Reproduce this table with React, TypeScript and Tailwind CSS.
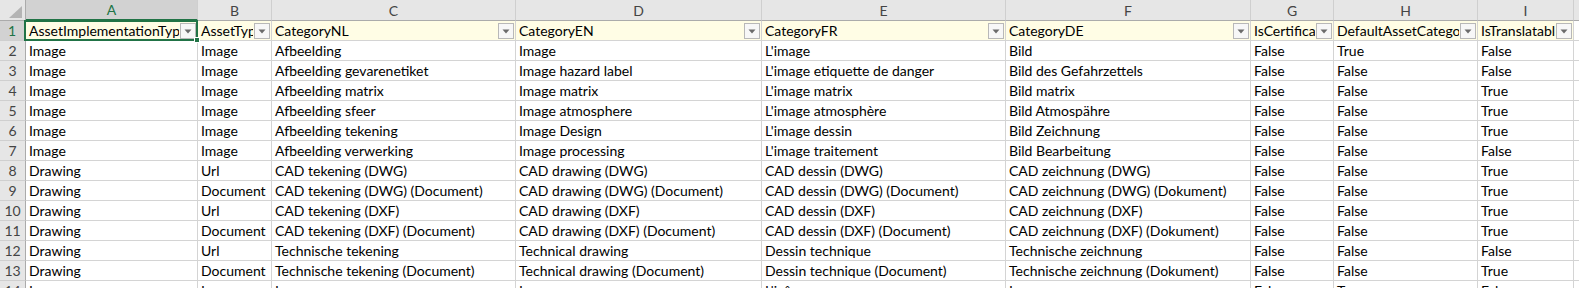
import React from "react";

const cols = [
  { k: "A", w: "w-[172px]" },
  { k: "B", w: "w-[74px]" },
  { k: "C", w: "w-[244px]" },
  { k: "D", w: "w-[246px]" },
  { k: "E", w: "w-[244px]" },
  { k: "F", w: "w-[245px]" },
  { k: "G", w: "w-[83px]" },
  { k: "H", w: "w-[144px]" },
  { k: "I", w: "w-[96px]" },
];

const header = [
  "AssetImplementationType",
  "AssetType",
  "CategoryNL",
  "CategoryEN",
  "CategoryFR",
  "CategoryDE",
  "IsCertificate",
  "DefaultAssetCategory",
  "IsTranslatable",
];

const rows: string[][] = [
  ["Image", "Image", "Afbeelding", "Image", "L'image", "Bild", "False", "True", "False"],
  ["Image", "Image", "Afbeelding gevarenetiket", "Image hazard label", "L'image etiquette de danger", "Bild des Gefahrzettels", "False", "False", "False"],
  ["Image", "Image", "Afbeelding matrix", "Image matrix", "L'image matrix", "Bild matrix", "False", "False", "True"],
  ["Image", "Image", "Afbeelding sfeer", "Image atmosphere", "L'image atmosphère", "Bild Atmospähre", "False", "False", "True"],
  ["Image", "Image", "Afbeelding tekening", "Image Design", "L'image dessin", "Bild Zeichnung", "False", "False", "True"],
  ["Image", "Image", "Afbeelding verwerking", "Image processing", "L'image traitement", "Bild Bearbeitung", "False", "False", "False"],
  ["Drawing", "Url", "CAD tekening (DWG)", "CAD drawing (DWG)", "CAD dessin (DWG)", "CAD zeichnung (DWG)", "False", "False", "True"],
  ["Drawing", "Document", "CAD tekening (DWG) (Document)", "CAD drawing (DWG) (Document)", "CAD dessin (DWG) (Document)", "CAD zeichnung (DWG) (Dokument)", "False", "False", "True"],
  ["Drawing", "Url", "CAD tekening (DXF)", "CAD drawing (DXF)", "CAD dessin (DXF)", "CAD zeichnung (DXF)", "False", "False", "True"],
  ["Drawing", "Document", "CAD tekening (DXF) (Document)", "CAD drawing (DXF) (Document)", "CAD dessin (DXF) (Document)", "CAD zeichnung (DXF) (Dokument)", "False", "False", "True"],
  ["Drawing", "Url", "Technische tekening", "Technical drawing", "Dessin technique", "Technische zeichnung", "False", "False", "False"],
  ["Drawing", "Document", "Technische tekening (Document)", "Technical drawing (Document)", "Dessin technique (Document)", "Technische zeichnung (Dokument)", "False", "False", "True"],
  ["Image", "Image", "Icoon", "Icon", "L'icône", "Icon", "False", "True", "False"],
];

const font = { fontFamily: "Lato, 'Open Sans', sans-serif" };

function FilterButton() {
  return (
    <div className="absolute right-[1px] bottom-[1px] w-[16px] h-[16px] border border-[#b8b8b8] bg-[#f7f7f7] flex items-center justify-center">
      <svg width="8" height="5" viewBox="0 0 8 5">
        <path d="M0.5 0.5 L7.5 0.5 L4 4.5 Z" fill="#6b6b6b" />
      </svg>
    </div>
  );
}

export default function App() {
  return (
    <div className="w-[1579px] h-[288px] overflow-hidden bg-white text-black" style={font}>
      {/* column header row */}
      <div className="flex h-[21px]">
        <div className="w-[26px] h-[21px] shrink-0 bg-[#e6e6e6] border-r border-b border-[#ababab] relative">
          <svg className="absolute left-[9px] top-[6px]" width="13" height="12" viewBox="0 0 13 12">
            <path d="M13 0 L13 12 L0 12 Z" fill="#b4b4b4" />
          </svg>
        </div>
        {cols.map((c, i) => (
          <div
            key={c.k}
            className={`${c.w} h-[21px] shrink-0 flex items-center justify-center text-[14px] border-r border-[#cfcfcf] ${
              i === 0
                ? "bg-[#d2d2d2] text-[#217346] border-b-2 border-b-[#217346]"
                : "bg-[#e6e6e6] text-[#444444] border-b border-b-[#ababab]"
            }`}
          >
            {c.k}
          </div>
        ))}
        <div className="flex-1 h-[21px] bg-[#e6e6e6] border-b border-[#ababab]" />
      </div>

      {/* header data row (row 1) */}
      <div className="flex h-[20px]">
        <div className="w-[26px] h-[20px] shrink-0 bg-[#d2d2d2] border-r-2 border-[#217346] border-b border-b-[#cfcfcf] flex items-center justify-center text-[14px] text-[#217346]">
          1
        </div>
        {cols.map((c, i) => (
          <div
            key={c.k}
            className={`${c.w} h-[20px] shrink-0 relative bg-[#fffde5] border-r border-b border-[#d4d4d4] text-[14px] whitespace-nowrap`}
          >
            <div className="absolute left-0 top-0 bottom-0 right-[18px] overflow-hidden pl-[3px] flex items-center">
              {header[i]}
            </div>
            <FilterButton />
            {i === 0 && (
              <div className="absolute left-[-2px] top-[-1px] right-[-1px] bottom-[-1px] border-2 border-[#217346] z-10">
                <div className="absolute right-[-4px] bottom-[-4px] w-[6px] h-[6px] bg-[#217346] border border-white" />
              </div>
            )}
          </div>
        ))}
        <div className="flex-1 h-[20px] border-b border-[#d4d4d4]" />
      </div>

      {rows.map((r, ri) => (
        <div key={ri} className="flex h-[20px]">
          <div className="w-[26px] h-[20px] shrink-0 bg-[#e6e6e6] border-r border-[#ababab] border-b border-b-[#cfcfcf] flex items-center justify-center text-[14px] text-[#444444]">
            {ri + 2}
          </div>
          {cols.map((c, ci) => (
            <div
              key={c.k}
              className={`${c.w} h-[20px] shrink-0 border-r border-b border-[#d4d4d4] text-[14px] whitespace-nowrap overflow-hidden pl-[3px] flex items-center`}
            >
              {r[ci]}
            </div>
          ))}
          <div className="flex-1 h-[20px] border-b border-[#d4d4d4]" />
        </div>
      ))}
    </div>
  );
}
